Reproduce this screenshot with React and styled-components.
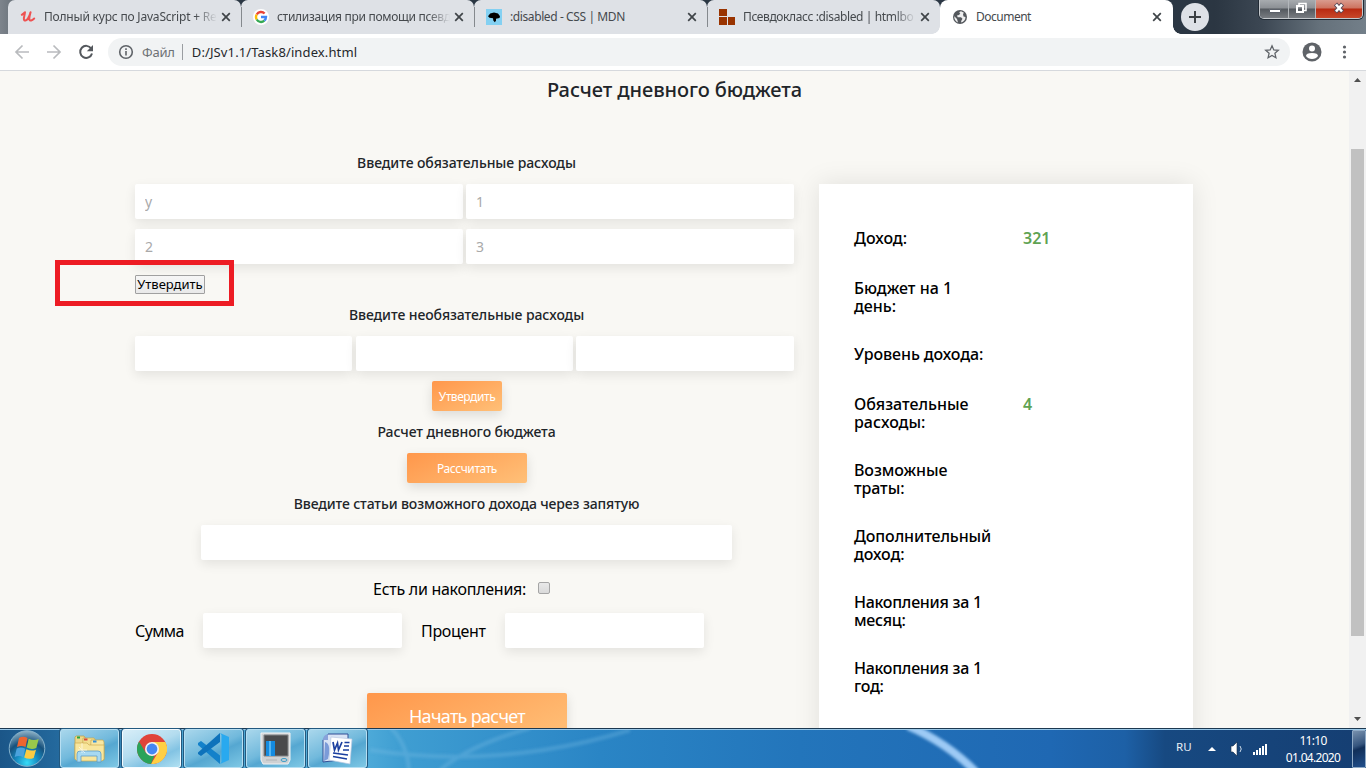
import React from "react";
import styled, { createGlobalStyle, css } from "styled-components";

const GlobalStyle = createGlobalStyle`
  * { box-sizing: border-box; }
  html, body { margin: 0; padding: 0; overflow: hidden; }
  button, input { font-family: inherit; }
`;

const Screen = styled.div`
  display: flex;
  flex-direction: column;
  width: 1366px;
  height: 768px;
  overflow: hidden;
  background: #fff;
  font-family: "Noto Sans", "Open Sans", sans-serif;
`;

/* Browser chrome */

const TabStrip = styled.div`
  display: flex;
  height: 34px;
  padding-left: 8px;
  flex: none;
  position: relative;
  background: linear-gradient(90deg, #7d848c 0, #6f777f 10px, #2b3744 240px, #2b3744 1160px, #2b3642 1215px, #3c4753 1262px, #65717b 1320px, #737f89 100%);
`;

const Tab = styled.div`
  display: flex;
  align-items: center;
  width: 233px;
  height: 34px;
  padding: 0 10px 0 12px;
  flex: none;
  position: relative;
  color: #45494d;
  background: ${(p) => (p.$active ? "#fff" : "#dee1e6")};
  border-radius: ${(p) => (p.$active ? "8px 8px 0 0" : "7px 7px 0 0")};
  ${(p) =>
    p.$active &&
    css`
      padding-right: 11px;
      &::after {
        content: "";
        position: absolute;
        right: -8px;
        bottom: 0;
        width: 8px;
        height: 8px;
        background: radial-gradient(circle at 8px 0, transparent 7.5px, #fff 8px);
      }
      &::before {
        content: "";
        position: absolute;
        left: -8px;
        bottom: 0;
        width: 8px;
        height: 8px;
        background: radial-gradient(circle at 0 0, transparent 7.5px, #fff 8px);
      }
    `}
  ${(p) =>
    p.$divider &&
    css`
      &::after {
        content: "";
        position: absolute;
        z-index: 1;
        right: -1px;
        top: 7px;
        width: 1px;
        height: 20px;
        background: #85898e;
      }
    `}
`;

const Favicon = styled.span`
  display: flex;
  width: 16px;
  height: 16px;
  flex: none;
`;

const TabTitle = styled.span`
  flex: 1;
  min-width: 0;
  margin: 0 0 0 8px;
  white-space: nowrap;
  font-size: 12px;
  line-height: 18px;
  letter-spacing: ${(p) => p.$spacing || 0}px;
  ${(p) =>
    p.$fade &&
    css`
      -webkit-mask-image: linear-gradient(90deg, #000 calc(100% - 26px), transparent calc(100% - 4px));
      mask-image: linear-gradient(90deg, #000 calc(100% - 26px), transparent calc(100% - 4px));
    `}
`;

const NewTab = styled.div`
  display: flex;
  width: 28px;
  height: 28px;
  margin: 3px 0 0 8px;
  border-radius: 50%;
  background: #dee1e6;
`;

const WindowButtons = styled.div`
  display: flex;
  height: 19px;
  margin-left: auto;
  margin-right: 3px;
  overflow: hidden;
  border: 1px solid #c4c8cc;
  border-top: 0;
  border-radius: 0 0 5px 5px;
  box-shadow: 0 0 0 1px #222b35;
`;

const WindowButton = styled.div`
  display: flex;
  width: ${(p) => p.$width}px;
  border-left: ${(p) => (p.$first ? "0" : "1px solid #b3b7bb")};
  background: ${(p) =>
    p.$close
      ? "linear-gradient(#d99b8e 0, #cd7360 8px, #b82a12 9px, #c8472a 100%)"
      : "linear-gradient(#a7abaf 0, #8c9095 8px, #54595f 9px, #787c81 100%)"};
`;

const Toolbar = styled.div`
  display: flex;
  align-items: center;
  height: 37px;
  flex: none;
  padding: 0 12px 0 12px;
  border-bottom: 1px solid #d6d9dd;
  background: #fff;
`;

const NavIcons = styled.div`
  display: flex;
  gap: 12px;
  width: 96px;
`;

const AddressBar = styled.div`
  display: flex;
  align-items: center;
  width: 1182px;
  height: 28px;
  padding: 0 10px;
  border-radius: 14px;
  background: #f1f3f4;
`;

const Scheme = styled.span`
  margin-left: 8px;
  padding-right: 7px;
  border-right: 1px solid #9a9da1;
  color: #6d7175;
  font-size: 13px;
  line-height: 16px;
  letter-spacing: -0.2px;
`;

const Address = styled.span`
  flex: 1;
  margin-left: 9px;
  color: #24272b;
  font-size: 13px;
  line-height: 18px;
  letter-spacing: 0.12px;
`;

const ToolbarEnd = styled.div`
  display: flex;
  gap: 10px;
  margin-left: 10px;
`;

/* Page */

const Viewport = styled.div`
  display: flex;
  height: 657px;
  flex: none;
  position: relative;
  overflow: hidden;
  background: #f9f8f4;
`;

const Page = styled.main`
  width: 1349px;
  height: 657px;
  overflow: hidden;
`;

const PageTitle = styled.h1`
  margin: 0;
  height: 71px;
  padding-top: 4px;
  text-align: center;
  color: #212529;
  font-size: 20px;
  font-weight: 500;
  line-height: 30px;
  letter-spacing: -0.08px;
`;

const Columns = styled.div`
  display: flex;
  align-items: flex-start;
  gap: 25px;
  padding-left: 135px;
`;

const Form = styled.section`
  display: flex;
  flex-direction: column;
  width: 659px;
`;

const Heading = styled.h2`
  margin: 0;
  height: 42px;
  padding-left: 4px;
  text-align: center;
  color: #212529;
  font-size: 14px;
  font-weight: 500;
  line-height: 42px;
  letter-spacing: ${(p) => p.$spacing || -0.07}px;
`;

const FieldRow = styled.div`
  display: flex;
  justify-content: ${(p) => (p.$center ? "center" : "space-between")};
  padding-left: ${(p) => (p.$center ? 4 : 0)}px;
  margin-bottom: 10px;
`;

const Field = styled.input`
  width: ${(p) => p.$width}px;
  height: 35px;
  padding: 0 10px;
  border: 0;
  border-radius: 2px;
  outline: 0;
  background: #fff;
  box-shadow: 0 4px 12px rgba(0, 0, 0, 0.09);
  font-size: 14px;
  &::placeholder { color: #a9a9a9; opacity: 1; }
`;

const PlainButtonRow = styled.div`
  height: 20px;
  padding-top: 1px;
`;

const PlainButton = styled.button`
  display: block;
  width: 70px;
  height: 19px;
  padding: 0;
  border: 1px solid #a0a0a0;
  border-radius: 1px;
  color: #000;
  background: linear-gradient(#f6f6f6, #e9e9e9);
  font-size: 13px;
  line-height: 17px;
  white-space: nowrap;
`;

const ActionButton = styled.button`
  display: block;
  width: ${(p) => p.$width}px;
  height: ${(p) => p.$height || 30}px;
  margin: 0 auto;
  padding: 0 0 0 1px;
  position: relative;
  left: 2px;
  flex: none;
  border: 0;
  border-radius: 2px;
  color: #fff;
  background: linear-gradient(155deg, #ff974b, #ffc078);
  box-shadow: 0 4px 12px rgba(0, 0, 0, 0.12);
  font-size: ${(p) => p.$size || 12}px;
  letter-spacing: ${(p) => p.$spacing || -0.42}px;
  white-space: nowrap;
`;

const SavingsRow = styled.label`
  display: flex;
  align-items: center;
  height: 38px;
  margin-bottom: 5px;
  padding-left: 238px;
  font-size: 16px;
  letter-spacing: -0.27px;
`;

const Checkbox = styled.span`
  width: 12px;
  height: 12px;
  margin: -2px 0 0 12px;
  border: 1px solid #a5a5a5;
  border-radius: 2px;
  background: linear-gradient(#e9e9e9, #dadada);
`;

const DepositRow = styled.div`
  display: flex;
  align-items: center;
  margin-bottom: 45px;
  font-size: 16px;
`;

const DepositLabel = styled.span`
  width: ${(p) => p.$width}px;
  padding-left: ${(p) => p.$indent || 0}px;
  letter-spacing: ${(p) => p.$spacing || 0}px;
`;

const Results = styled.aside`
  width: 374px;
  height: 700px;
  margin-top: 42px;
  padding: 45px 35px 0;
  background: #fff;
  box-shadow: 0 0 25px rgba(0, 0, 0, 0.1);
`;

const ResultRow = styled.div`
  display: flex;
  margin-bottom: ${(p) => p.$gap || 30}px;
  font-size: 16px;
  font-weight: 500;
  line-height: 18px;
`;

const ResultName = styled.div`
  width: 169px;
  color: #000;
  white-space: pre-line;
  letter-spacing: ${(p) => p.$spacing || 0}px;
`;

const ResultValue = styled.div`
  color: #5fa353;
  font-weight: 600;
`;

const Scrollbar = styled.div`
  display: flex;
  flex-direction: column;
  align-items: center;
  justify-content: space-between;
  width: 17px;
  height: 657px;
  background: #f1f1f1;
`;

const Thumb = styled.div`
  width: 13px;
  height: 487px;
  margin: 61px 0 75px;
  background: #c1c1c1;
`;

const Highlight = styled.div`
  position: absolute;
  left: 55px;
  top: 189px;
  width: 179px;
  height: 46px;
  border: 5px solid #ed1c24;
`;

/* Taskbar */

const Taskbar = styled.div`
  display: flex;
  height: 40px;
  flex: none;
  position: relative;
  border-top: 1px solid #1c3850;
  box-shadow: inset 0 1px 0 #9ac8e8;
  background: linear-gradient(90deg, #1b5688 0, #23689c 55px, #4aa3d0 180px, #55b0dc 350px, #3f9ed2 400px, #2a85c5 600px, #2375bb 800px, #1f68b3 1050px, #1d60a6 1125px, #174981 1165px, #153e72 100%);
`;

const TaskbarGlow = styled.svg`
  position: absolute;
  left: 340px;
  top: 1px;
`;

const Start = styled.div`
  display: flex;
  width: 60px;
  padding-left: 8px;
`;

const Tasks = styled.div`
  display: flex;
  gap: 3px;
`;

const Task = styled.div`
  display: flex;
  align-items: center;
  justify-content: center;
  width: 59px;
  height: 39px;
  border: 1px solid ${(p) => (p.$active ? "#f4fbff" : "#b7dff2")};
  border-radius: 3px;
  box-shadow: 0 0 0 1px #23597f;
  background: ${(p) =>
    p.$active
      ? "linear-gradient(155deg, #d8eef8 0, #b3dcef 45%, #82c3e3 70%, #b2e1f2 100%)"
      : "linear-gradient(155deg, #a9d7ec 0, #71b9dc 48%, #55a7d1 60%, #7fc8e5 100%)"};
`;

const Tray = styled.div`
  display: flex;
  align-items: center;
  margin-left: auto;
  position: relative;
  color: #fff;
  font-size: 12px;
`;

const Language = styled.span`
  width: 29px;
  padding-bottom: 5px;
  font-size: 11.5px;
  color: #e8eef5;
`;

const Clock = styled.div`
  display: flex;
  flex-direction: column;
  align-items: center;
  width: 76px;
  margin-left: 7px;
  line-height: 17px;
  letter-spacing: -0.7px;
`;

const ShowDesktop = styled.div`
  width: 14px;
  height: 38px;
  margin-left: 1px;
  border: 1px solid #8faac6;
  border-radius: 1px;
  background: linear-gradient(160deg, #7790ad 0, #35557e 40%, #112f59 50%, #214f8c 100%);
`;

/* Icons */

const CloseIcon = () => (
  <svg width="10" height="10" viewBox="0 0 10 10">
    <path d="M1.2 1.2 8.8 8.8M8.8 1.2 1.2 8.8" stroke="#3f4448" strokeWidth="1.7" />
  </svg>
);

const UdemyIcon = () => (
  <svg width="16" height="16" viewBox="0 0 16 16" fill="none" stroke="#ee5252" strokeLinecap="round" strokeLinejoin="round">
    <path d="M1.8 5.800C3 5 4.200 4 5 3.200 4.700 6 3.600 8.400 3.900 10.400c.3 2 2.600 1.400 4-.8C9 7.800 10 5.500 10.600 3.300 9.900 6 8.800 9 9.500 10.800c.5 1.300 2.300.9 4.700-1.300" strokeWidth="2" />
  </svg>
);

const GoogleIcon = () => (
  <svg width="16" height="16" viewBox="0 0 16 16" fill="none">
    <circle cx="8" cy="8" r="8" fill="#fff" />
    <g strokeWidth="2.4">
      <path d="M11.600 4.500A5 5 0 0 0 3.700 5.500" stroke="#ea4335" />
      <path d="M3.700 5.500a5 5 0 0 0 0 5" stroke="#fbbc05" />
      <path d="M3.700 10.500a5 5 0 0 0 7.600 1.200" stroke="#34a853" />
      <path d="M11.300 11.700A5 5 0 0 0 13 8H8" stroke="#4285f4" />
    </g>
  </svg>
);

const MdnIcon = () => (
  <svg width="16" height="16" viewBox="0 0 16 16">
    <path d="M0 0h16v16H0z" fill="#83d0f2" />
    <path d="M2 7.200 4.200 4.500 8 3.500l4 1 2 2.800-.5 1.700-3.500.8v2L8.800 13.200 7.300 11.500 7 9.300 3.500 8.800z" />
  </svg>
);

const BlocksIcon = () => (
  <svg width="16" height="16" viewBox="0 0 16 16" fill="#993300">
    <path d="M0 0h8v7H0zM0 8h8v8H0zM9 8h7v8H9z" />
  </svg>
);

const GlobeIcon = () => (
  <svg width="16" height="16" viewBox="0 0 16 16">
    <circle cx="8" cy="8" r="7" fill="#54585d" />
    <path d="M9 2.300c-2 .3-2 1.700-.7 2.300L7 6 5 6.500l.7 1.700H9l1.500 1.500L9.200 12v1.500c2.600-.5 4.300-2.800 4.300-5.500l-2-.5-.5-2.500 1-1.300z" fill="#fff" opacity=".9" />
    <path d="M2.300 7.300 5 10l1 3.400C3.500 12.600 2 10.200 2.300 7.300z" fill="#fff" opacity=".9" />
  </svg>
);

const ExplorerIcon = () => (
  <svg width="34" height="32" viewBox="0 0 34 32">
    <path d="M3 3h8l2 3v20H2V4z" fill="#eed98b" stroke="#b99c46" strokeWidth=".7" />
    <path d="M10 5h11l2 3v18H9z" fill="#f3df91" stroke="#c4a74f" strokeWidth=".7" />
    <path d="M18 7h12l1 2v18H17z" fill="#f7e7a2" stroke="#c4a74f" strokeWidth=".7" />
    <path d="M4 3.500h3v2H4z" fill="#27a541" /><path d="M11 5.500h3.500v2H11z" fill="#d84a3b" /><path d="M20 7.500h3.500v2H20z" fill="#318fd8" />
    <path d="M2 10h12l2 2h15v14l-2 2H4l-2-2z" fill="#f8e69d" stroke="#cead50" strokeWidth=".7" />
    <path d="M4 29v-8q0-3 3-3h18q3 0 3 3v8h-4v-6H8v6z" fill="#a7d9f1" stroke="#5d9dc6" strokeWidth=".8" />
    <path d="M9 10v10M5 17h9M6 14l6 6" stroke="#fff" opacity=".6" />
  </svg>
);

const ChromeIcon = () => (
  <svg width="30" height="30" viewBox="0 0 30 30">
    <circle cx="15" cy="15" r="15" fill="#e0443a" />
    <path d="M15 8h13.300A15 15 0 0 1 14 30l7-11.500z" fill="#ffcf44" />
    <path d="M2 7.500 9 19l6 3 2.500-.5L14 30A15 15 0 0 1 2 7.500z" fill="#29a35a" />
    <circle cx="15" cy="15" r="7" fill="#f3f3f3" />
    <circle cx="15" cy="15" r="5.400" fill="#4587f3" />
  </svg>
);

const CodeIcon = () => (
  <svg width="33" height="33" viewBox="0 0 33 33">
    <path d="M23 23.500 4 9 1 11v2l22 19z" fill="#1381ca" />
    <path d="M1 20.500 23 1v9L4 24l-3-2z" fill="#0d72bb" />
    <path d="M23 1l9 4v23l-9 4 1.500-2V3z" fill="#29a9ef" />
  </svg>
);

const MonitorIcon = () => (
  <svg width="31" height="33" viewBox="0 0 31 33">
    <path d="M1 1h29v27l-2 4H3l-2-4z" fill="#cfd1d3" stroke="#f3f3f3" />
    <path d="M4 3h24v21H4z" fill="#4a4a4c" stroke="#818385" />
    <path d="M6 9h9v15H6z" fill="#158be0" /><path d="M9 9h2v15H9z" fill="#55b6f4" />
    <ellipse cx="24" cy="28" rx="3" ry="1.500" fill="none" stroke="#3b9cc8" />
    <path d="M6 28h11" stroke="#b0b3b5" />
  </svg>
);

const WordIcon = () => (
  <svg width="33" height="32" viewBox="0 0 33 32">
    <path d="M7 1h20v25l-25 3V7z" fill="#d8e3f5" stroke="#304f96" />
    <path d="M7 1v6H2q0-5 5-6z" fill="#88a2da" />
    <path d="M4 9c5 1 5 9 3 17l-4 2z" fill="#7b9bd8" />
    <path d="m10 4 21 2-2 25-21-4z" fill="#fff" stroke="#b9c8e3" strokeWidth=".7" />
    <path d="m12 9 1.500 8 3-7 1 7 3.500-8" fill="none" stroke="#1b3f9f" strokeWidth="1.700" />
    <path d="M23.500 9.500h5M23 13h5M22 17h6M12 20l15 2M12 23.500l14 2.500" stroke="#1b3f9f" strokeWidth="1.700" />
  </svg>
);

const StartIcon = () => (
  <svg width="38" height="38" viewBox="0 0 38 38">
    <defs>
      <radialGradient id="orb" cx=".5" cy=".9" r=".9">
        <stop offset="0" stopColor="#37dcf8" />
        <stop offset=".35" stopColor="#168ac0" />
        <stop offset=".65" stopColor="#16517d" />
        <stop offset="1" stopColor="#92b4c7" />
      </radialGradient>
    </defs>
    <circle cx="19" cy="19.500" r="17.800" fill="url(#orb)" stroke="#85b2cc" strokeWidth="1" />
    <path d="M11 9q4-2.500 8.500 0l-2 9q-4-2-8.500 0z" fill="#ed6530" />
    <path d="M20.700 9.700q5 2.500 10 .3l-2.400 9q-5 2-9.600-.5z" fill="#98c94b" />
    <path d="M8.700 19.500q4.300-2 8.500.2l-2 8.500q-4-2-8.500-.3z" fill="#4ba2dc" />
    <path d="M18.400 20.200q5 2.400 9.600.5l-2.300 8.200q-4.800 2-9.500-.3z" fill="#fccb43" />
  </svg>
);

const TrayIcons = () => (
  <svg width="63" height="39" viewBox="0 0 63 39">
    <path d="m3 22 4-4 4 4z" fill="#fff" />
    <path d="M26 17h2l4-4v14l-4-4h-2z" fill="#fff" stroke="#142b46" strokeWidth=".6" />
    <path d="M35 17q2.500 3 0 6" fill="none" stroke="#cad9e8" />
    <path d="M48 23h2v3h-2zM51 21h2v5h-2zM54 19h2v7h-2zM57 17h2v9h-2zM60 15h2v11h-2z" fill="#fff" />
  </svg>
);

const tabs = [
  { title: "Полный курс по JavaScript + Re", icon: <UdemyIcon />, spacing: -0.2, fade: true },
  { title: "стилизация при помощи псевд", icon: <GoogleIcon />, spacing: -0.3, fade: true },
  { title: ":disabled - CSS | MDN", icon: <MdnIcon />, spacing: -0.4 },
  { title: "Псевдокласс :disabled | htmlbo", icon: <BlocksIcon />, spacing: -0.38, fade: true },
];

const results = [
  { name: "Доход:", value: "321", gap: 32 },
  { name: "Бюджет на 1\nдень:" },
  { name: "Уровень дохода:", gap: 32, spacing: -0.1 },
  { name: "Обязательные\nрасходы:", value: "4" },
  { name: "Возможные\nтраты:", spacing: -0.1 },
  { name: "Дополнительный\nдоход:", spacing: -0.1 },
  { name: "Накопления за 1\nмесяц:", spacing: -0.27 },
  { name: "Накопления за 1\nгод:", spacing: -0.27 },
];

export default function App() {
  return (
    <Screen>
      <GlobalStyle />
      <TabStrip>
        {tabs.map((tab, i) => (
          <Tab key={tab.title} $divider={i < 3}>
            <Favicon>{tab.icon}</Favicon>
            <TabTitle $spacing={tab.spacing} $fade={tab.fade}>{tab.title}</TabTitle>
            <CloseIcon />
          </Tab>
        ))}
        <Tab $active>
          <Favicon><GlobeIcon /></Favicon>
          <TabTitle $spacing={-0.5}>Document</TabTitle>
          <CloseIcon />
        </Tab>
        <NewTab>
          <svg width="28" height="28"><path d="M14 8v12M8 14h12" stroke="#3c4043" strokeWidth="2" /></svg>
        </NewTab>
        <WindowButtons>
          <WindowButton $width={28} $first>
            <svg width="28" height="18"><path d="M9.500 9.500h11v3h-11z" fill="#fff" stroke="#5b6069" /></svg>
          </WindowButton>
          <WindowButton $width={27}>
            <svg width="26" height="18" fill="none">
              <path d="M10 6V3.500h7v7h-2" stroke="#fff" strokeWidth="1.500" />
              <path d="M8 6h6v6H8z" stroke="#fff" strokeWidth="2" />
            </svg>
          </WindowButton>
          <WindowButton $width={47} $close>
            <svg width="46" height="18"><path d="m19.500 4 7 8m0-8-7 8" stroke="#5a4a57" strokeWidth="4.200" /><path d="m20 4.500 6 7m0-7-6 7" stroke="#fff" strokeWidth="2.600" /></svg>
          </WindowButton>
        </WindowButtons>
      </TabStrip>
      <Toolbar>
        <NavIcons>
          <svg width="20" height="20" fill="none" stroke="#b9bbbe" strokeWidth="1.700"><path d="M17 10H4m6.500-6.500L4 10l6.500 6.500" /></svg>
          <svg width="20" height="20" fill="none" stroke="#b9bbbe" strokeWidth="1.700"><path d="M3 10h13M9.500 3.500 16 10l-6.500 6.500" /></svg>
          <svg width="20" height="20" fill="none"><path d="M15.200 6.500A6 6 0 1 0 16 11.500" stroke="#54585d" strokeWidth="2" /><path d="M17 3v6.200h-6.200z" fill="#54585d" /></svg>
        </NavIcons>
        <AddressBar>
          <svg width="16" height="16" fill="none" stroke="#5f6368" strokeWidth="1.600"><circle cx="8" cy="8" r="6.300" /><path d="M8 7v4.500M8 4.300v1.700" /></svg>
          <Scheme>Файл</Scheme>
          <Address>D:/JSv1.1/Task8/index.html</Address>
          <svg width="16" height="16" viewBox="0 0 16 16" fill="none" stroke="#5f6368" strokeWidth="1.300"><path d="m8 1.800 1.800 4.100 4.500.4-3.400 3 1 4.400L8 11.400l-3.900 2.300 1-4.400-3.400-3 4.500-.4z" /></svg>
        </AddressBar>
        <ToolbarEnd>
          <svg width="24" height="20" viewBox="0 0 24 20"><circle cx="12" cy="10" r="9.500" fill="#5f6368" /><circle cx="12" cy="6.500" r="3" fill="#fff" /><path d="M6 14q0-3 6-3t6 3q-2 3-6 3t-6-3z" fill="#fff" /></svg>
          <svg width="20" height="20" fill="#5f6368"><circle cx="10.500" cy="5" r="1.600" /><circle cx="10.500" cy="10" r="1.600" /><circle cx="10.500" cy="15" r="1.600" /></svg>
        </ToolbarEnd>
      </Toolbar>
      <Viewport>
        <Page>
          <PageTitle>Расчет дневного бюджета</PageTitle>
          <Columns>
            <Form>
              <Heading>Введите обязательные расходы</Heading>
              <FieldRow><Field $width={328} placeholder="у" /><Field $width={328} placeholder="1" /></FieldRow>
              <FieldRow><Field $width={328} placeholder="2" /><Field $width={328} placeholder="3" /></FieldRow>
              <PlainButtonRow><PlainButton>Утвердить</PlainButton></PlainButtonRow>
              <Heading>Введите необязательные расходы</Heading>
              <FieldRow><Field $width={217} /><Field $width={217} /><Field $width={218} /></FieldRow>
              <ActionButton $width={70}>Утвердить</ActionButton>
              <Heading>Расчет дневного бюджета</Heading>
              <ActionButton $width={120}>Рассчитать</ActionButton>
              <Heading $spacing={-0.12}>Введите статьи возможного дохода через запятую</Heading>
              <FieldRow $center><Field $width={531} /></FieldRow>
              <SavingsRow>Есть ли накопления:<Checkbox /></SavingsRow>
              <DepositRow>
                <DepositLabel $width={68} $spacing={-0.6}>Сумма</DepositLabel>
                <Field $width={199} />
                <DepositLabel $width={103} $indent={19} $spacing={-0.3}>Процент</DepositLabel>
                <Field $width={199} />
              </DepositRow>
              <ActionButton $width={200} $height={45} $size={18} $spacing={-0.7}>Начать расчет</ActionButton>
            </Form>
            <Results>
              {results.map((row) => (
                <ResultRow key={row.name} $gap={row.gap}>
                  <ResultName $spacing={row.spacing}>{row.name}</ResultName>
                  <ResultValue>{row.value}</ResultValue>
                </ResultRow>
              ))}
            </Results>
          </Columns>
        </Page>
        <Scrollbar>
          <svg width="17" height="17"><path d="m5 11 3.500-4 3.500 4z" fill="#505050" /></svg>
          <Thumb />
          <svg width="17" height="17"><path d="m5 6 3.500 4L12 6z" fill="#505050" /></svg>
        </Scrollbar>
        <Highlight />
      </Viewport>
      <Taskbar>
        <TaskbarGlow width="840" height="38" fill="none">
          <defs><filter id="soft"><feGaussianBlur stdDeviation="1.500" /></filter></defs>
          <g filter="url(#soft)">
            <path d="M568-4q38 16 68 46" stroke="#9dcaf5" strokeWidth="8" />
            <path d="M51-2q16 16 18 42M190-2Q130 15 100 40M30 20q130 20 260-20" stroke="#77bce5" strokeWidth="4" opacity=".35" />
          </g>
        </TaskbarGlow>
        <Start><StartIcon /></Start>
        <Tasks>
          <Task><ExplorerIcon /></Task>
          <Task $active><ChromeIcon /></Task>
          <Task><CodeIcon /></Task>
          <Task><MonitorIcon /></Task>
          <Task><WordIcon /></Task>
        </Tasks>
        <Tray>
          <Language>RU</Language>
          <TrayIcons />
          <Clock><span>11:10</span><span>01.04.2020</span></Clock>
          <ShowDesktop />
        </Tray>
      </Taskbar>
    </Screen>
  );
}
